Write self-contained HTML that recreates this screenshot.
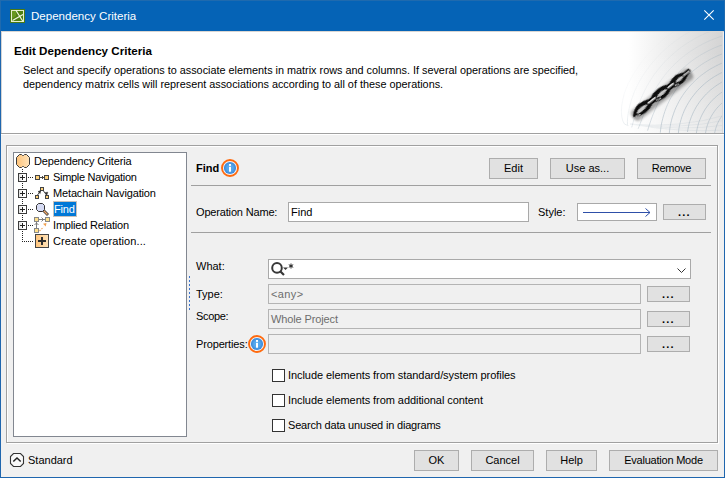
<!DOCTYPE html>
<html><head><meta charset="utf-8">
<style>
*{box-sizing:border-box;margin:0;padding:0}
html,body{width:725px;height:478px;overflow:hidden;background:#f0f0f0;font-family:"Liberation Sans",sans-serif;font-size:11px;color:#000}
.a{position:absolute}
.t{position:absolute;white-space:pre;line-height:1}
.btn{position:absolute;background:#e1e1e1;border:1px solid #adadad;text-align:center;color:#000;white-space:pre}
.fld{position:absolute;background:#fff;border:1px solid #a9a9a9}
.dis{position:absolute;background:#f0f0f0;border:1px solid #b4b4b4}
.cb{position:absolute;width:13px;height:13px;border:1px solid #333;background:#fff}
.sep{position:absolute;height:1px;background:#a0a0a0}
.dd{position:absolute;background:#e1e1e1;border:1px solid #adadad}
</style></head><body>
<!-- window frame -->
<div class="a" style="left:0;top:0;width:725px;height:478px;border:1px solid #1f66ae;border-top:none;background:#f0f0f0"></div>
<div class="a" style="left:0;top:0;width:725px;height:31px;background:#0563b6"></div>
<div class="a" style="left:0;top:0;width:725px;height:1px;background:#1f6aae"></div>
<div class="a" style="left:0;top:0;width:1px;height:31px;background:#1f6aae"></div>
<div class="a" style="left:724px;top:0;width:1px;height:31px;background:#1f6aae"></div>
<svg class="a" style="left:10px;top:9px" width="15" height="14" viewBox="0 0 15 14">
<rect x="0.5" y="0.5" width="14" height="13" fill="#3f6e0c" stroke="#4a7a14"/>
<rect x="1.5" y="1.5" width="12" height="11" fill="#4f8012" stroke="#e4eecc"/>

<path d="M6 1.5 L13 12.5 M2.5 11.5 L13 5.5" stroke="#f0f6e0" stroke-width="1.2" fill="none"/>
<path d="M2 2 L6 2 L6 7 L2 10 Z" fill="#7aa82a" opacity="0.6"/>
</svg>
<div class="t" style="left:31px;top:11px;font-size:11.55px;color:#fff">Dependency Criteria</div>
<svg class="a" style="left:703px;top:9px" width="13" height="13" viewBox="0 0 13 13">
<path d="M1.3 1.3 L10.7 10.7 M10.7 1.3 L1.3 10.7" stroke="#fff" stroke-width="1.1"/>
</svg>

<!-- header -->
<div class="a" style="left:1px;top:31px;width:722px;height:102px;background:#fff"></div>
<svg class="a" style="left:560px;top:31px" width="163" height="102" viewBox="560 31 163 102">
<defs>
<linearGradient id="hg" x1="0" x2="1" y1="0" y2="0"><stop offset="0" stop-color="#fff"/><stop offset="0.42" stop-color="#fff"/><stop offset="1" stop-color="#d4d4d4"/></linearGradient>
<linearGradient id="hv" x1="0" x2="0" y1="0" y2="1"><stop offset="0.2" stop-color="#fff" stop-opacity="0"/><stop offset="1" stop-color="#fff" stop-opacity="0.45"/></linearGradient>
<clipPath id="hc"><rect x="560" y="31" width="162" height="102"/></clipPath>
</defs>
<rect x="560" y="31" width="163" height="102" fill="url(#hg)"/>
<rect x="560" y="31" width="163" height="102" fill="url(#hv)"/>
<mask id="am"><rect x="560" y="31" width="163" height="102" fill="url(#amg)"/></mask>
<linearGradient id="amg" x1="635" y1="60" x2="680" y2="105" gradientUnits="userSpaceOnUse"><stop offset="0" stop-color="#000"/><stop offset="0.5" stop-color="#444"/><stop offset="1" stop-color="#fff"/></linearGradient>
<filter id="bl" x="-20%" y="-20%" width="140%" height="140%"><feGaussianBlur stdDeviation="1.2"/></filter>
<filter id="bl2"><feGaussianBlur stdDeviation="0.35"/></filter>
<g clip-path="url(#hc)" mask="url(#am)" fill="none" stroke="#a6b6c2" stroke-width="0.75" opacity="0.75">
<path d="M626.9 125.1 L624.6 124.1 L622.9 121.2 L621.8 117.1 L621.4 111.9 L621.7 106.2 L622.7 100.2 L624.1 94.2 L626.1 88.6 L628.3 83.5 L630.8 78.8 L633.5 74.1 L636.4 69.5 L639.4 65.1 L642.7 60.7 L646.1 56.5 L649.7 52.4 L653.5 48.5 L657.5 44.6 L661.6 41.0 L665.8 37.5 L670.2 34.1 L674.8 30.9 L679.4 27.9 L684.2 25.0 L689.1 22.3 L694.2 19.8 L699.3 17.5 L704.5 15.4 L709.8 13.5 L715.2 11.8 L720.6 10.2 L726.2 8.9 L731.7 7.7 L737.3 6.8 L743.0 6.1 L748.6 5.6 L754.3 5.3 L760.0 5.2"/><path d="M628.0 126.1 L627.5 124.5 L627.4 121.7 L627.6 117.9 L628.2 113.3 L629.2 108.2 L630.6 102.8 L632.3 97.3 L634.3 92.0 L636.5 87.1 L638.8 82.6 L641.3 78.2 L644.0 73.9 L646.9 69.7 L650.0 65.7 L653.2 61.7 L656.6 57.9 L660.1 54.1 L663.8 50.6 L667.7 47.1 L671.7 43.8 L675.8 40.7 L680.1 37.7 L684.4 34.8 L688.9 32.2 L693.5 29.6 L698.3 27.3 L703.1 25.1 L708.0 23.1 L712.9 21.3 L718.0 19.7 L723.1 18.3 L728.3 17.0 L733.5 16.0 L738.7 15.1 L744.0 14.4 L749.3 13.9 L754.7 13.6 L760.0 13.5"/><path d="M631.7 127.4 L632.3 125.3 L633.1 122.3 L634.1 118.7 L635.3 114.5 L636.8 110.0 L638.5 105.2 L640.3 100.3 L642.4 95.5 L644.6 90.8 L646.8 86.4 L649.2 82.3 L651.7 78.3 L654.4 74.4 L657.3 70.6 L660.3 66.9 L663.4 63.3 L666.7 59.8 L670.2 56.5 L673.8 53.3 L677.5 50.2 L681.4 47.2 L685.4 44.4 L689.4 41.8 L693.6 39.3 L697.9 36.9 L702.3 34.8 L706.8 32.7 L711.4 30.9 L716.0 29.2 L720.8 27.7 L725.5 26.3 L730.4 25.2 L735.2 24.2 L740.1 23.3 L745.1 22.7 L750.0 22.3 L755.0 22.0 L760.0 21.9"/><path d="M638.1 128.8 L639.2 126.2 L640.4 123.1 L641.7 119.6 L643.2 115.7 L644.8 111.6 L646.5 107.4 L648.4 103.0 L650.4 98.7 L652.5 94.4 L654.8 90.3 L657.0 86.4 L659.4 82.7 L661.9 79.0 L664.5 75.5 L667.3 72.1 L670.3 68.7 L673.3 65.5 L676.6 62.4 L679.9 59.4 L683.4 56.6 L686.9 53.8 L690.6 51.2 L694.4 48.8 L698.3 46.4 L702.3 44.3 L706.4 42.2 L710.6 40.3 L714.8 38.6 L719.2 37.0 L723.5 35.6 L728.0 34.4 L732.5 33.3 L737.0 32.4 L741.5 31.6 L746.1 31.0 L750.7 30.6 L755.4 30.3 L760.0 30.3"/><path d="M647.6 130.6 L648.5 127.5 L649.6 124.1 L650.8 120.6 L652.1 116.9 L653.6 113.2 L655.2 109.4 L656.9 105.5 L658.7 101.7 L660.6 97.9 L662.7 94.2 L664.8 90.5 L667.0 87.0 L669.4 83.7 L671.8 80.4 L674.4 77.2 L677.1 74.2 L680.0 71.2 L682.9 68.3 L686.0 65.6 L689.2 62.9 L692.5 60.4 L695.9 58.0 L699.4 55.7 L703.0 53.6 L706.7 51.6 L710.5 49.7 L714.4 47.9 L718.3 46.3 L722.3 44.9 L726.3 43.6 L730.4 42.4 L734.6 41.4 L738.7 40.6 L742.9 39.9 L747.2 39.3 L751.4 38.9 L755.7 38.7 L760.0 38.6"/><path d="M660.3 132.7 L660.7 129.1 L661.2 125.5 L661.9 121.9 L662.8 118.3 L663.8 114.8 L664.9 111.3 L666.2 107.8 L667.6 104.4 L669.2 101.1 L670.9 97.8 L672.8 94.6 L674.7 91.4 L676.9 88.3 L679.1 85.3 L681.5 82.4 L684.0 79.6 L686.6 76.9 L689.3 74.2 L692.1 71.7 L695.1 69.3 L698.1 67.0 L701.2 64.8 L704.4 62.7 L707.8 60.7 L711.1 58.9 L714.6 57.1 L718.1 55.5 L721.7 54.1 L725.4 52.7 L729.1 51.6 L732.9 50.5 L736.7 49.6 L740.5 48.8 L744.4 48.1 L748.2 47.6 L752.2 47.3 L756.1 47.1 L760.0 47.0"/><path d="M669.3 133.4 L669.6 130.1 L670.1 126.8 L670.7 123.5 L671.5 120.2 L672.4 117.0 L673.5 113.8 L674.6 110.7 L675.9 107.6 L677.4 104.6 L678.9 101.6 L680.6 98.6 L682.4 95.8 L684.3 93.0 L686.4 90.3 L688.5 87.6 L690.8 85.0 L693.2 82.6 L695.7 80.2 L698.2 77.9 L700.9 75.6 L703.7 73.5 L706.5 71.5 L709.4 69.6 L712.5 67.8 L715.5 66.2 L718.7 64.6 L721.9 63.1 L725.2 61.8 L728.5 60.6 L731.9 59.5 L735.3 58.5 L738.8 57.7 L742.2 57.0 L745.8 56.4 L749.3 56.0 L752.9 55.6 L756.4 55.4 L760.0 55.4"/><path d="M678.3 134.0 L678.6 131.0 L679.0 128.1 L679.6 125.1 L680.3 122.2 L681.1 119.3 L682.0 116.4 L683.1 113.6 L684.2 110.8 L685.5 108.1 L686.9 105.4 L688.5 102.7 L690.1 100.2 L691.8 97.6 L693.7 95.2 L695.6 92.8 L697.6 90.5 L699.8 88.2 L702.0 86.1 L704.3 84.0 L706.7 82.0 L709.2 80.1 L711.8 78.3 L714.4 76.6 L717.2 75.0 L719.9 73.5 L722.8 72.1 L725.7 70.7 L728.6 69.5 L731.6 68.5 L734.7 67.5 L737.7 66.6 L740.9 65.8 L744.0 65.2 L747.2 64.7 L750.4 64.3 L753.6 64.0 L756.8 63.8 L760.0 63.7"/><path d="M687.5 132.0 L687.9 129.4 L688.4 126.8 L689.0 124.2 L689.7 121.6 L690.6 119.0 L691.5 116.5 L692.6 114.0 L693.7 111.6 L695.0 109.2 L696.3 106.8 L697.8 104.5 L699.3 102.3 L700.9 100.1 L702.7 98.0 L704.5 95.9 L706.4 93.9 L708.4 92.0 L710.4 90.1 L712.6 88.4 L714.8 86.7 L717.1 85.1 L719.4 83.6 L721.9 82.1 L724.3 80.8 L726.9 79.5 L729.4 78.3 L732.1 77.3 L734.7 76.3 L737.4 75.4 L740.2 74.7 L743.0 74.0 L745.8 73.4 L748.6 72.9 L751.4 72.6 L754.3 72.3 L757.1 72.2 L760.0 72.1"/><path d="M696.4 133.0 L696.8 130.7 L697.2 128.4 L697.8 126.1 L698.4 123.8 L699.1 121.6 L700.0 119.4 L700.9 117.2 L701.9 115.1 L703.0 113.0 L704.2 110.9 L705.4 108.9 L706.8 106.9 L708.2 105.0 L709.7 103.2 L711.3 101.3 L713.0 99.6 L714.7 97.9 L716.6 96.3 L718.4 94.7 L720.4 93.3 L722.4 91.8 L724.4 90.5 L726.6 89.3 L728.7 88.1 L730.9 87.0 L733.2 85.9 L735.5 85.0 L737.8 84.2 L740.2 83.4 L742.6 82.7 L745.1 82.1 L747.5 81.6 L750.0 81.2 L752.5 80.9 L755.0 80.7 L757.5 80.5 L760.0 80.5"/><path d="M705.4 134.0 L705.7 132.0 L706.1 130.0 L706.5 128.1 L707.1 126.1 L707.7 124.2 L708.4 122.3 L709.2 120.4 L710.1 118.6 L711.0 116.8 L712.0 115.0 L713.1 113.3 L714.3 111.6 L715.5 109.9 L716.8 108.3 L718.2 106.8 L719.6 105.3 L721.1 103.8 L722.7 102.4 L724.3 101.1 L725.9 99.8 L727.7 98.6 L729.4 97.5 L731.3 96.4 L733.1 95.4 L735.0 94.4 L737.0 93.5 L739.0 92.7 L741.0 92.0 L743.0 91.4 L745.1 90.8 L747.2 90.3 L749.3 89.8 L751.4 89.5 L753.5 89.2 L755.7 89.0 L757.8 88.9 L760.0 88.8"/><path d="M714.6 133.3 L714.9 131.7 L715.3 130.0 L715.7 128.4 L716.3 126.8 L716.8 125.2 L717.5 123.6 L718.2 122.1 L719.0 120.6 L719.9 119.1 L720.8 117.6 L721.8 116.2 L722.8 114.9 L723.9 113.5 L725.0 112.2 L726.2 111.0 L727.5 109.7 L728.8 108.6 L730.1 107.5 L731.5 106.4 L733.0 105.4 L734.4 104.4 L736.0 103.5 L737.5 102.7 L739.1 101.9 L740.7 101.1 L742.4 100.5 L744.1 99.9 L745.8 99.3 L747.5 98.8 L749.3 98.4 L751.0 98.0 L752.8 97.7 L754.6 97.5 L756.4 97.4 L758.2 97.3 L760.0 97.2"/>
</g>
<g clip-path="url(#hc)" mask="url(#am)" fill="none" stroke="#b8c4cc" stroke-width="0.6" opacity="0.4">
<path d="M630 124 Q680 133.0 726 130"/><path d="M630 124 Q680 131.5 726 125"/><path d="M630 124 Q680 130.0 726 120"/><path d="M630 124 Q680 128.5 726 115"/>
</g>
<rect x="722" y="31" width="1" height="102" fill="#d8d8d8"/>
<!-- chain -->
<g transform="translate(661 93.5) rotate(-38) scale(1 1.2)">
<g filter="url(#bl)" opacity="0.35">
<rect x="-37" y="-3.5" width="74" height="10" rx="4" fill="#000"/>
</g>
<g filter="url(#bl2)">
<path d="M-36.5 1 Q-30 -4.8 -24 -4.5 Q-18 -4 -13 -2.6 L-10 -2.6 Q-6 -4.6 1 -4.5 Q7 -4.2 10 -2.6 L13 -2.6 Q18 -4.5 23.5 -4.3 Q28 -3.5 31 -2 L37 -2.2 L37.5 0.5 L31 2.2 Q27 4 23.5 4.2 Q18 4.2 13 2.5 L10 2.5 Q6 4.5 1 4.6 Q-6 4.5 -10 2.5 L-13 2.5 Q-18 4.6 -24 4.6 Q-32 4 -36.5 1 Z" fill="#0c0c0c"/>
<path d="M-32 0.8 Q-25 -2.9 -17 0.2 Q-25 3.1 -32 0.8 Z" fill="#c8c8c8"/>
<path d="M-6 0.4 Q1 -2.9 8 0.2 Q1 3.1 -6 0.4 Z" fill="#c8c8c8"/>
<path d="M18 0.3 Q23.5 -2.6 29 0.1 Q23.5 2.8 18 0.3 Z" fill="#c8c8c8"/>
<path d="M-16 -0.2 L-7 -0.2 M9 -0.2 L16 -0.2 M29 -0.1 L36 -0.1" stroke="#ececec" stroke-width="1.2" stroke-linecap="round"/>
<path d="M-34 2.2 L-29 3 M-8 2.2 L-3 3 M16 2 L20 2.8" stroke="#e8e8e8" stroke-width="0.7"/>
</g>
</g>
</svg>
<div class="t" style="left:14px;top:45px;font-size:11.6px;font-weight:bold">Edit Dependency Criteria</div>
<div class="t" style="left:23px;top:63px;font-size:10.85px;line-height:14px">Select and specify operations to associate elements in matrix rows and columns. If several operations are specified,
dependency matrix cells will represent associations according to all of these operations.</div>
<div class="a" style="left:1px;top:133px;width:723px;height:1px;background:#a0a0a0"></div>
<div class="a" style="left:1px;top:134px;width:723px;height:1px;background:#fff"></div>
<div class="a" style="left:1px;top:31px;width:1px;height:102px;background:#d4d4d4"></div>
<div class="a" style="left:1px;top:31px;width:723px;height:1px;background:#dad6d2"></div>

<!-- group box -->
<div class="a" style="left:6px;top:145px;width:712px;height:298px;border:1px solid #a0a0a0;box-shadow:inset 1px 1px 0 #fff, 1px 1px 0 #fff"></div>

<!-- tree -->
<div class="a" style="left:13px;top:152px;width:174px;height:285px;background:#fff;border:1px solid #828790"></div>
<svg class="a" style="left:14px;top:153px" width="172" height="100" viewBox="14 153 172 100">
<defs>
<linearGradient id="og" x1="0" x2="1" y1="0" y2="0"><stop offset="0" stop-color="#ffc47a"/><stop offset="1" stop-color="#ffe3ba"/></linearGradient>
<linearGradient id="eg" x1="0" x2="1"><stop offset="0" stop-color="#d8d8d8"/><stop offset="0.5" stop-color="#ffffff"/></linearGradient>
</defs>
<path d="M19.5 154.5 L21.5 154.5 L22.5 155.5 L23.5 155.5 L24.5 154.5 L26.5 154.5 L29.5 157.5 L29.5 164.5 L26.5 167.5 L24.5 167.5 L23.5 166.5 L22.5 166.5 L21.5 167.5 L19.5 167.5 L16.5 164.5 L16.5 157.5 Z" fill="url(#og)" stroke="#3a3a3a" stroke-width="1"/>
<g fill="#222">
<rect x="22" y="169" width="1" height="1"/><rect x="22" y="171" width="1" height="1"/><rect x="22" y="173" width="1" height="1"/><rect x="22" y="175" width="1" height="1"/><rect x="22" y="177" width="1" height="1"/><rect x="22" y="179" width="1" height="1"/><rect x="22" y="181" width="1" height="1"/><rect x="22" y="183" width="1" height="1"/><rect x="22" y="185" width="1" height="1"/><rect x="22" y="187" width="1" height="1"/><rect x="22" y="189" width="1" height="1"/><rect x="22" y="191" width="1" height="1"/><rect x="22" y="193" width="1" height="1"/><rect x="22" y="195" width="1" height="1"/><rect x="22" y="197" width="1" height="1"/><rect x="22" y="199" width="1" height="1"/><rect x="22" y="201" width="1" height="1"/><rect x="22" y="203" width="1" height="1"/><rect x="22" y="205" width="1" height="1"/><rect x="22" y="207" width="1" height="1"/><rect x="22" y="209" width="1" height="1"/><rect x="22" y="211" width="1" height="1"/><rect x="22" y="213" width="1" height="1"/><rect x="22" y="215" width="1" height="1"/><rect x="22" y="217" width="1" height="1"/><rect x="22" y="219" width="1" height="1"/><rect x="22" y="221" width="1" height="1"/><rect x="22" y="223" width="1" height="1"/><rect x="22" y="225" width="1" height="1"/><rect x="22" y="227" width="1" height="1"/><rect x="22" y="229" width="1" height="1"/><rect x="22" y="231" width="1" height="1"/><rect x="22" y="233" width="1" height="1"/><rect x="22" y="235" width="1" height="1"/><rect x="22" y="237" width="1" height="1"/><rect x="22" y="239" width="1" height="1"/><rect x="22" y="241" width="1" height="1"/><rect x="28" y="177" width="1" height="1"/><rect x="30" y="177" width="1" height="1"/><rect x="32" y="177" width="1" height="1"/><rect x="28" y="193" width="1" height="1"/><rect x="30" y="193" width="1" height="1"/><rect x="32" y="193" width="1" height="1"/><rect x="28" y="209" width="1" height="1"/><rect x="30" y="209" width="1" height="1"/><rect x="32" y="209" width="1" height="1"/><rect x="28" y="225" width="1" height="1"/><rect x="30" y="225" width="1" height="1"/><rect x="32" y="225" width="1" height="1"/><rect x="24" y="241" width="1" height="1"/><rect x="26" y="241" width="1" height="1"/><rect x="28" y="241" width="1" height="1"/><rect x="30" y="241" width="1" height="1"/><rect x="32" y="241" width="1" height="1"/>
</g>
<rect x="18.5" y="173.5" width="8" height="8" fill="url(#eg)" stroke="#3c3c3c"/><path d="M20 177.5 L25 177.5 M22.5 175 L22.5 180" stroke="#222"/><rect x="18.5" y="189.5" width="8" height="8" fill="url(#eg)" stroke="#3c3c3c"/><path d="M20 193.5 L25 193.5 M22.5 191 L22.5 196" stroke="#222"/><rect x="18.5" y="205.5" width="8" height="8" fill="url(#eg)" stroke="#3c3c3c"/><path d="M20 209.5 L25 209.5 M22.5 207 L22.5 212" stroke="#222"/><rect x="18.5" y="221.5" width="8" height="8" fill="url(#eg)" stroke="#3c3c3c"/><path d="M20 225.5 L25 225.5 M22.5 223 L22.5 228" stroke="#222"/>
<rect x="35.5" y="175.5" width="4" height="4" fill="#ffd27a" stroke="#444"/>
<rect x="44.5" y="175.5" width="4" height="4" fill="#ffd27a" stroke="#444"/>
<path d="M40 177.5 L44 177.5" stroke="#444"/>
<path d="M42 176 L43.5 177.5 L42 179" stroke="#444" fill="none"/>
<rect x="40.5" y="187.5" width="3" height="3" fill="#ffd27a" stroke="#444"/>
<rect x="35.5" y="195.5" width="3" height="3" fill="#ffd27a" stroke="#444"/>
<rect x="45.5" y="195.5" width="3" height="3" fill="#ffd27a" stroke="#444"/>
<path d="M37.5 195 L40.5 191 M43.5 191 L46.5 195" stroke="#444"/>
<path d="M40.6 190.6 L38 191.6 L40.2 193.6 Z M46.8 195.2 L45.2 192.6 L47.8 192.2 Z" fill="#333" stroke="#333" stroke-width="0.5"/>
<path d="M43.5 210.5 L47 214" stroke="#3a3a3a" stroke-width="2.8" stroke-linecap="square"/>
<path d="M43.5 210.5 L47 214" stroke="#f2a868" stroke-width="1.3" stroke-linecap="square"/>
<path d="M38.5 203.5 L42.5 203.5 L44.5 205.5 L44.5 209.5 L42.5 211.5 L38.5 211.5 L36.5 209.5 L36.5 205.5 Z" fill="#d6dbf4" stroke="#333" stroke-width="1"/>
<path d="M39 219.5 L45 219.5" stroke="#808080"/>
<path d="M41.5 217.5 L43.5 219.5 L41.5 221.5" stroke="#707070" fill="none" stroke-width="0.9"/>
<path d="M36.5 222 L36.5 228" stroke="#808080"/>
<path d="M34.5 225 L36.5 223 L38.5 225" stroke="#707070" fill="none" stroke-width="0.9"/>
<path d="M39.5 231 L43.5 227" stroke="#f0a050" stroke-dasharray="1.4 1.4" stroke-width="1.1"/>
<path d="M46.5 223 L43 223.8 L45.7 226.5 Z" fill="#f0a050"/>
<rect x="34.5" y="217.5" width="4" height="4" fill="#ffe08a" stroke="#888"/>
<rect x="45.5" y="217.5" width="4" height="4" fill="#ffe08a" stroke="#888"/>
<rect x="34.5" y="228.5" width="4" height="4" fill="#ffe08a" stroke="#888"/>
<rect x="35.5" y="234.5" width="13" height="13" fill="url(#og)" stroke="#444"/>
<path d="M42 237 L42 245 M38 241 L46 241" stroke="#2e2e2e" stroke-width="2"/>
</svg>
<div class="t" style="left:34px;top:156px;letter-spacing:-0.15px">Dependency Criteria</div>
<div class="t" style="left:53px;top:172px;letter-spacing:-0.3px">Simple Navigation</div>
<div class="t" style="left:53px;top:188px;letter-spacing:-0.15px">Metachain Navigation</div>
<div class="a" style="left:53px;top:201px;width:24px;height:16px;background:#0078d7;border:1px solid #c9c2bc"></div>
<div class="t" style="left:54px;top:204px;color:#fff;letter-spacing:-0.2px">Find</div>
<div class="t" style="left:53px;top:220px;letter-spacing:-0.18px">Implied Relation</div>
<div class="t" style="left:53px;top:236px;letter-spacing:0.1px">Create operation...</div>

<!-- right panel -->
<div class="t" style="left:196px;top:163px;font-weight:bold">Find</div>
<svg class="a" style="left:220px;top:158px" width="20" height="20" viewBox="0 0 20 20">
<defs><radialGradient id="ig" cx="0.5" cy="0.5" r="0.5"><stop offset="0.5" stop-color="#55a8ee"/><stop offset="1" stop-color="#3a84d4"/></radialGradient></defs>
<circle cx="10" cy="10" r="8" fill="#eef5fb" stroke="#ff6a0e" stroke-width="1.9"/>
<circle cx="10" cy="10" r="6.1" fill="url(#ig)"/>
<rect x="9" y="8.8" width="2" height="4.9" fill="#fff"/>
<rect x="9" y="6" width="2" height="1.9" fill="#fff"/>
</svg>
<div class="btn" style="left:489px;top:158px;width:49px;height:21px;line-height:19px">Edit</div>
<div class="btn" style="left:550px;top:158px;width:75px;height:21px;line-height:19px">Use as...</div>
<div class="btn" style="left:637px;top:158px;width:69px;height:21px;line-height:19px;letter-spacing:-0.25px">Remove</div>
<div class="sep" style="left:191px;top:185px;width:520px"></div>

<div class="t" style="left:196px;top:207px;letter-spacing:-0.17px">Operation Name:</div>
<div class="fld" style="left:288px;top:202px;width:241px;height:20px"></div>
<div class="t" style="left:291px;top:207px">Find</div>
<div class="t" style="left:538px;top:207px">Style:</div>
<div class="fld" style="left:577px;top:203px;width:80px;height:18px"></div>
<svg class="a" style="left:580px;top:207px" width="75" height="12" viewBox="580 207 75 12">
<path d="M583 212.5 L650 212.5 M645.5 208.5 L650 212.5 L645.5 216.5" stroke="#2e4fa8" stroke-width="1" fill="none"/>
</svg>
<div class="btn" style="left:663px;top:204px;width:43px;height:16px;line-height:15px;letter-spacing:1.2px;font-weight:bold">...</div>
<div class="sep" style="left:191px;top:232px;width:520px"></div>

<div class="t" style="left:196px;top:261px">What:</div>
<div class="fld" style="left:268px;top:259px;width:423px;height:20px"></div>
<svg class="a" style="left:269px;top:260px" width="421" height="18" viewBox="269 260 421 18">
<circle cx="277" cy="267.9" r="4.8" fill="none" stroke="#383838" stroke-width="2"/>
<path d="M280.5 271.5 L284 275" stroke="#383838" stroke-width="2.2"/>
<path d="M283 267.5 L288 267.5 L285.5 270 Z" fill="#383838"/>
<path d="M291 263.5 L291 268.5 M288.8 264.7 L293.2 267.3 M293.2 264.7 L288.8 267.3" stroke="#222" stroke-width="1"/>
<path d="M677.5 268.5 L681.5 272.5 L685.5 268.5" stroke="#333" stroke-width="1" fill="none"/>
</svg>
<div class="a" style="left:189px;top:276px;width:1px;height:35px;background:repeating-linear-gradient(#3c74cc 0 2px, transparent 2px 4px)"></div>
<div class="t" style="left:196px;top:289px">Type:</div>
<div class="dis" style="left:268px;top:284px;width:373px;height:20px"></div>
<div class="t" style="left:271px;top:289px;color:#6d6d6d;letter-spacing:0.4px">&lt;any&gt;</div>
<div class="btn" style="left:647px;top:286px;width:43px;height:16px;line-height:15px;letter-spacing:1.2px;font-weight:bold">...</div>
<div class="t" style="left:196px;top:311px;letter-spacing:-0.35px">Scope:</div>
<div class="dis" style="left:268px;top:309px;width:373px;height:20px"></div>
<div class="t" style="left:271px;top:314px;color:#6d6d6d;letter-spacing:-0.12px">Whole Project</div>
<div class="btn" style="left:647px;top:311px;width:43px;height:16px;line-height:15px;letter-spacing:1.2px;font-weight:bold">...</div>
<div class="t" style="left:196px;top:339px;letter-spacing:-0.15px">Properties:</div>
<svg class="a" style="left:247px;top:334px" width="20" height="20" viewBox="0 0 20 20">
<circle cx="10" cy="10" r="8" fill="#eef5fb" stroke="#ff6a0e" stroke-width="1.9"/>
<circle cx="10" cy="10" r="6.1" fill="url(#ig)"/>
<rect x="9" y="8.8" width="2" height="4.9" fill="#fff"/>
<rect x="9" y="6" width="2" height="1.9" fill="#fff"/>
</svg>
<div class="dis" style="left:268px;top:334px;width:373px;height:20px"></div>
<div class="btn" style="left:647px;top:336px;width:43px;height:16px;line-height:15px;letter-spacing:1.2px;font-weight:bold">...</div>

<div class="cb" style="left:272px;top:369px"></div>
<div class="t" style="left:288px;top:370px;letter-spacing:-0.065px">Include elements from standard/system profiles</div>
<div class="cb" style="left:272px;top:394px"></div>
<div class="t" style="left:288px;top:395px;letter-spacing:-0.065px">Include elements from additional content</div>
<div class="cb" style="left:272px;top:419px"></div>
<div class="t" style="left:288px;top:420px;letter-spacing:-0.19px">Search data unused in diagrams</div>

<!-- bottom -->
<svg class="a" style="left:9px;top:452px" width="16" height="16" viewBox="9 452 16 16">
<path d="M13.5 453.5 L20.5 453.5 L23.5 456.5 L23.5 463.5 L20.5 466.5 L13.5 466.5 L10.5 463.5 L10.5 456.5 Z" fill="#f8f8f8" stroke="#333" stroke-width="1.1"/>
<path d="M13.3 461.5 L17 458 L20.7 461.5" stroke="#222" stroke-width="1.5" fill="none"/>
</svg>
<div class="t" style="left:28px;top:455px">Standard</div>
<div class="btn" style="left:414px;top:450px;width:45px;height:21px;line-height:19px">OK</div>
<div class="btn" style="left:471px;top:450px;width:63px;height:21px;line-height:19px">Cancel</div>
<div class="btn" style="left:546px;top:450px;width:51px;height:21px;line-height:19px">Help</div>
<div class="btn" style="left:609px;top:450px;width:109px;height:21px;line-height:19px;letter-spacing:-0.22px">Evaluation Mode</div>
</body></html>
